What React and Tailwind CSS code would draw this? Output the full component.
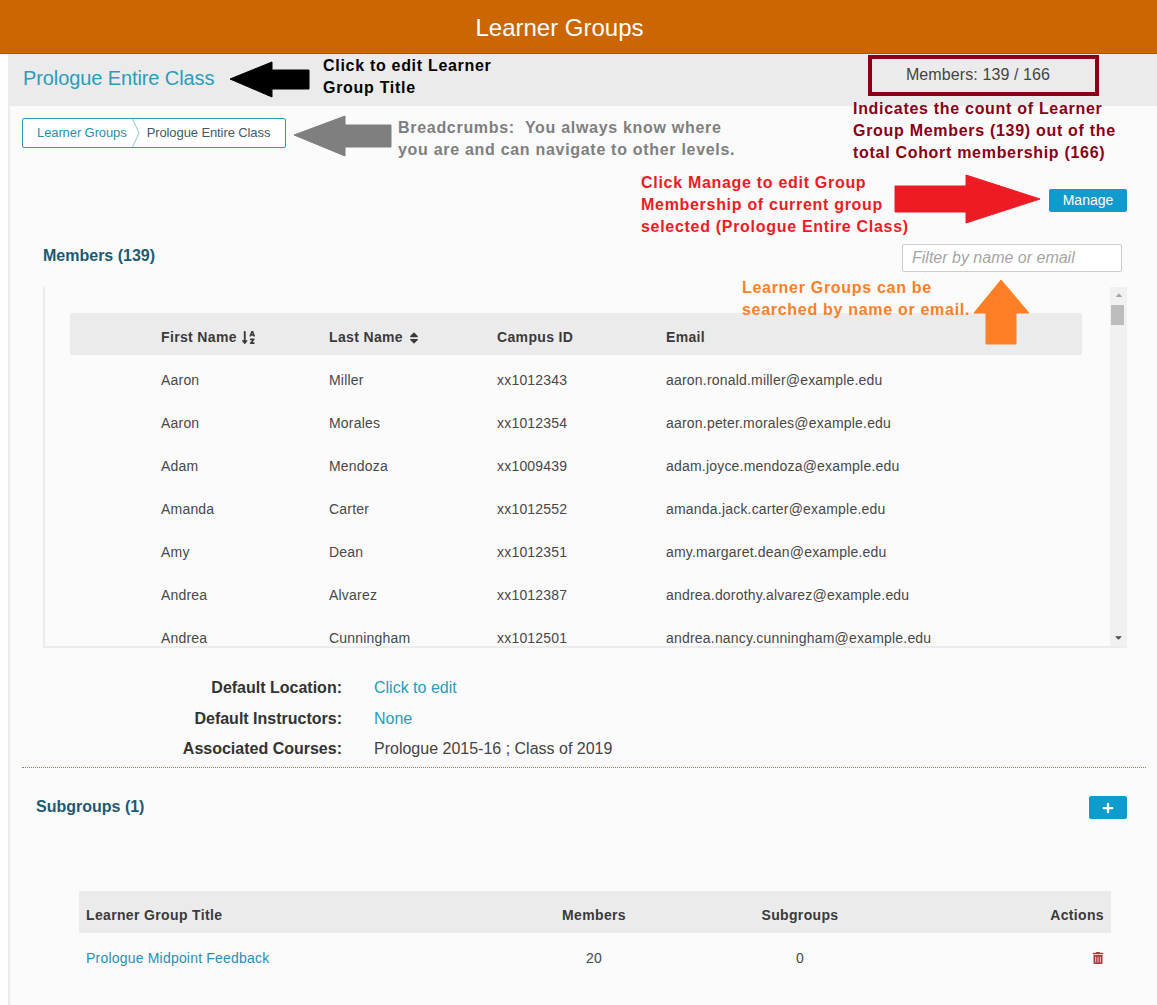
import React from "react";
import { FaSortAlphaDown, FaSort, FaPlus, FaTrashAlt, FaCaretUp, FaCaretDown } from "react-icons/fa";

const people = [
  ["Aaron", "Miller", "xx1012343", "aaron.ronald.miller@example.edu"],
  ["Aaron", "Morales", "xx1012354", "aaron.peter.morales@example.edu"],
  ["Adam", "Mendoza", "xx1009439", "adam.joyce.mendoza@example.edu"],
  ["Amanda", "Carter", "xx1012552", "amanda.jack.carter@example.edu"],
  ["Amy", "Dean", "xx1012351", "amy.margaret.dean@example.edu"],
  ["Andrea", "Alvarez", "xx1012387", "andrea.dorothy.alvarez@example.edu"],
  ["Andrea", "Cunningham", "xx1012501", "andrea.nancy.cunningham@example.edu"],
];

function Note({ className, lines }) {
  return (
    <div className={"absolute font-bold text-[16px] leading-[22px] tracking-[0.7px] whitespace-pre " + className}>
      {lines.map((l) => (
        <div key={l}>{l}</div>
      ))}
    </div>
  );
}

function Arrow({ points, fill }) {
  return (
    <svg className="absolute left-0 top-0 pointer-events-none" width="1157" height="1005" viewBox="0 0 1157 1005">
      <polygon points={points} fill={fill} stroke={fill} strokeWidth="1" strokeLinejoin="round" />
    </svg>
  );
}

export default function App() {
  return (
    <div className="relative w-[1157px] h-[1005px] overflow-hidden bg-[#fefefe] text-[#3c3c3c] font-['Liberation_Sans',Arial,sans-serif]">
      <header className="h-[54px] bg-[#cc6600] border-b border-[#9c5a1c] flex items-center justify-center pr-[38px] pt-[2px] text-white text-[24px]">
        Learner Groups
      </header>

      <main className="ml-[8px] h-[951px] border-l-2 border-[#ececec] bg-[#fbfbfb]">
        <div className="h-[52px] -ml-[2px] bg-[#ecebec] flex items-center pl-[15px]">
          <span className="text-[20px] tracking-[-0.1px] text-[#2a9cbc] -mt-[4px]">Prologue Entire Class</span>
          <div className="ml-auto mr-[58px] w-[231px] pr-[11px] text-center text-[16px] tracking-[0.1px] text-[#444] -mt-[11px]">Members: 139 / 166</div>
        </div>

        <nav className="mt-[12px] ml-[12px] w-[264px] h-[30px] border border-[#2a9cbc] rounded-[2px] bg-white flex items-center text-[13px]">
          <span className="ml-[14px] -mt-[1px] whitespace-nowrap text-[#2a8fae] tracking-[-0.1px]">Learner Groups</span>
          <svg className="ml-[5px]" width="8" height="28" viewBox="0 0 8 28">
            <path d="M0.5 0 L7 14 L0.5 28" fill="none" stroke="#8fc6d8" strokeWidth="1" />
          </svg>
          <span className="ml-[7px] -mt-[1px] whitespace-nowrap text-[#3f5a66] tracking-[-0.1px]">Prologue Entire Class</span>
        </nav>

        <div className="mt-[41px] mr-[30px] flex justify-end">
          <button className="w-[78px] h-[23px] rounded-[2px] bg-[#0f9ccc] text-white text-[14px]">Manage</button>
        </div>

        <div className="mt-[32px] h-[28px] pl-[33px] pr-[35px] flex items-center justify-between">
          <h2 className="text-[16px] font-bold text-[#1c5a73] -mt-[5px]">Members (139)</h2>
          <div className="w-[220px] h-[28px] border border-[#cccccc] rounded-[2px] bg-white flex items-center pl-[9px] italic text-[16px] text-[#a5a5a5]">
            Filter by name or email
          </div>
        </div>

        <section className="mt-[15px] ml-[33px] mr-[30px] h-[361px] border-l-2 border-b-2 border-[#ececec] flex">
          <div className="flex-1 overflow-hidden pt-[26px] pl-[25px] pr-[28px]">
            <div className="h-[42px] pt-[7px] rounded-[2px] bg-[#ecebec] grid grid-cols-[259px_168px_169px_1fr] items-center text-[14px] font-bold text-[#3a3a3a] tracking-[0.35px]">
              <div className="pl-[91px] flex items-center gap-[4px] whitespace-nowrap">
                First Name <FaSortAlphaDown className="text-[15px]" />
              </div>
              <div className="flex items-center gap-[4px]">
                Last Name <FaSort className="text-[14px]" />
              </div>
              <div>Campus ID</div>
              <div>Email</div>
            </div>
            {people.map((p) => (
              <div key={p[3]} className="h-[43px] pt-[8px] shrink-0 grid grid-cols-[259px_168px_169px_1fr] items-center text-[14px] tracking-[0.2px] text-[#484848]">
                <div className="pl-[91px]">{p[0]}</div>
                <div>{p[1]}</div>
                <div>{p[2]}</div>
                <div>{p[3]}</div>
              </div>
            ))}
          </div>
          <div className="w-[17px] bg-[#f1f1f1] flex flex-col items-center justify-between relative">
            <FaCaretUp className="text-[10px] text-[#a3a3a3] mt-[3px]" />
            <div className="absolute top-[18px] left-[1px] w-[13px] h-[20px] bg-[#bdbdbd]" />
            <FaCaretDown className="text-[11px] text-[#505050] mb-[3px]" />
          </div>
        </section>

        <dl className="mt-[25px] text-[16px]">
          <div className="h-[30px] flex items-center">
            <dt className="w-[332px] text-right font-bold text-[#333]">Default Location:</dt>
            <dd className="ml-[32px] text-[#2a9cbc]">Click to edit</dd>
          </div>
          <div className="h-[31px] flex items-center">
            <dt className="w-[332px] text-right font-bold text-[#333]">Default Instructors:</dt>
            <dd className="ml-[32px] text-[#2a9cbc]">None</dd>
          </div>
          <div className="h-[30px] flex items-center">
            <dt className="w-[332px] text-right font-bold text-[#333]">Associated Courses:</dt>
            <dd className="ml-[32px] text-[#444]">Prologue 2015-16 ; Class of 2019</dd>
          </div>
        </dl>

        <div className="mt-[3px] ml-[12px] mr-[11px] border-t border-dotted border-[#b5773c]" />

        <div className="mt-[28px] pl-[26px] pr-[30px] h-[23px] flex items-center justify-between">
          <h2 className="text-[16px] font-bold text-[#1c5a73] -mt-[2px]">Subgroups (1)</h2>
          <button className="w-[38px] h-[23px] rounded-[2px] bg-[#0f9ccc] text-white flex items-center justify-center">
            <FaPlus className="text-[12px]" />
          </button>
        </div>

        <div className="mt-[72px] ml-[69px] mr-[46px]">
          <div className="h-[42px] pt-[6px] bg-[#ecebec] grid grid-cols-[436px_158px_254px_1fr] items-center text-[14px] font-bold text-[#3a3a3a] tracking-[0.35px]">
            <div className="pl-[7px]">Learner Group Title</div>
            <div className="text-center">Members</div>
            <div className="text-center">Subgroups</div>
            <div className="text-right pr-[7px]">Actions</div>
          </div>
          <div className="h-[50px] grid grid-cols-[436px_158px_254px_1fr] items-center text-[14px] tracking-[0.2px] text-[#484848]">
            <div className="pl-[7px] text-[#2a8fae]">Prologue Midpoint Feedback</div>
            <div className="text-center">20</div>
            <div className="text-center">0</div>
            <div className="flex justify-end pr-[7px]">
              <FaTrashAlt className="text-[12px] text-[#a83c3c]" />
            </div>
          </div>
        </div>
      </main>

      {/* annotations laid over the page */}
      <div className="absolute left-[868px] top-[55px] w-[231px] h-[41px] border-[4px] border-[#880015]" />
      <Arrow fill="#000000" points="230,79 272,62 272,70 309,70 309,89 272,89 272,97" />
      <Arrow fill="#7f7f7f" points="294,135 345,116 345,125 391,125 391,147 345,147 345,156" />
      <Arrow fill="#ed1c24" points="1040,199 966,175 966,186 895,186 895,212 966,212 966,223" />
      <Arrow fill="#ff7f27" points="1001,280 1029,313 1016,313 1016,344 986,344 986,313 974,313" />
      <Note className="left-[323px] top-[55px] text-black" lines={["Click to edit Learner", "Group Title"]} />
      <Note className="left-[398px] top-[117px] text-[#7f7f7f]" lines={["Breadcrumbs:  You always know where", "you are and can navigate to other levels."]} />
      <Note className="left-[853px] top-[98px] text-[#880015]" lines={["Indicates the count of Learner", "Group Members (139) out of the", "total Cohort membership (166)"]} />
      <Note className="left-[641px] top-[172px] text-[#ed1c24]" lines={["Click Manage to edit Group", "Membership of current group", "selected (Prologue Entire Class)"]} />
      <Note className="left-[742px] top-[277px] text-[#ff7f27]" lines={["Learner Groups can be", "searched by name or email."]} />
    </div>
  );
}
